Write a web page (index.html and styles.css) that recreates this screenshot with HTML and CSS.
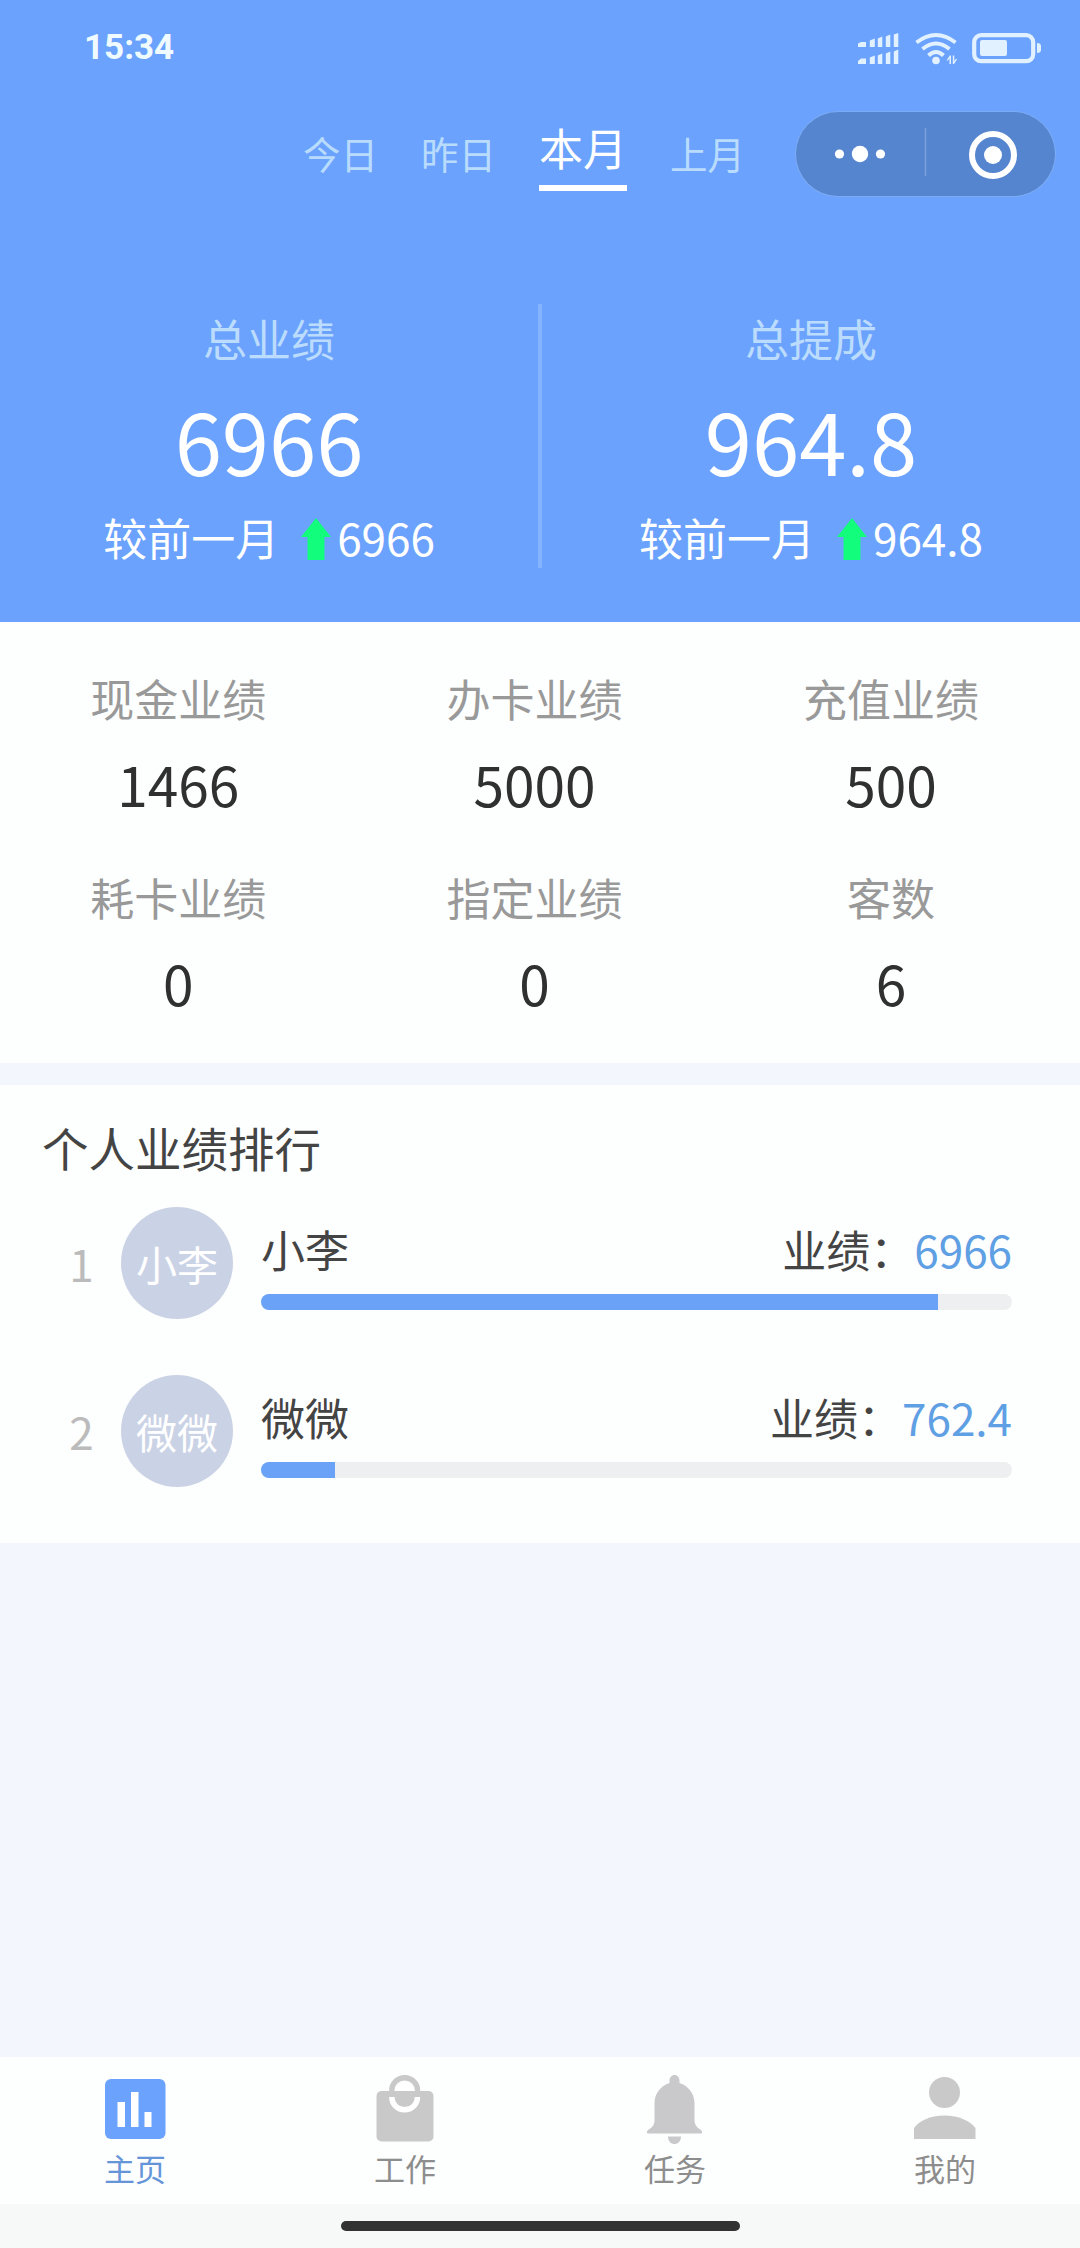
FILE: index.html
```html
<!DOCTYPE html>
<html lang="zh-CN">
<head>
<meta charset="utf-8">
<title>个人业绩</title>
<link rel="stylesheet" href="styles.css">
</head>
<body>
<header class="hero">
  <div class="status">
    <span class="time">15:34</span>
    <svg class="status-icons" width="186" height="34" viewBox="0 0 186 34" fill="#e2f1ff">
      <path d="M1 12.500l3-1.500h5v5H1zM12.800 9.500l5-2v8.500h-5zM20.800 7.500l4.500-2v10.500h-4.500zM28.800 5.500l4.500-2v12.500h-4.500zM36.800 3.500l4.500-1.500v14h-4.500z"/>
      <path d="M1 30l3-2.500h5v5.500H1zM12.800 26.500l5-2v8.500h-5zM20.800 24.500l4.500-2v10.500h-4.500zM28.800 22.500l4.500-2v12.500h-4.500zM36.800 20.500l4.500-2v14.500h-4.500z"/>
      <g fill="none" stroke="#e2f1ff" stroke-width="4">
        <path d="M59.500 11.500q19.500-15 39 0"/>
        <path d="M65.500 18q13.500-11 27 0"/>
        <path d="M71.500 24.500q7.500-7 15 0"/>
      </g>
      <circle cx="79" cy="29.500" r="3.800"/>
      <path d="M89.500 29.500l3.300-5h1.200v8.500h-1.500v-5.500l-1.500 2zM95.800 24.500h1.500v5.500l1.500-2h1.500l-3.300 5h-1.200z"/>
      <rect x="117.200" y="4.200" width="59" height="26" rx="7" fill="none" stroke="#e2f1ff" stroke-width="4.200"/>
      <rect x="123" y="9" width="27" height="16" rx="2"/>
      <path d="M180 12q4 0 4 3v4q0 3-4 3z"/>
    </svg>
  </div>
  <div class="navbar">
    <nav class="tabs">
      <span class="tab">今日</span>
      <span class="tab">昨日</span>
      <span class="tab active">本月</span>
      <span class="tab">上月</span>
    </nav>
    <div class="capsule">
      <svg width="259" height="83" viewBox="0 0 259 83">
        <g fill="#fff"><circle cx="43.500" cy="42" r="4.600"/><circle cx="64" cy="42" r="8.200"/><circle cx="84.500" cy="42" r="4.600"/><circle cx="197" cy="43" r="9"/></g>
        <path d="M129.500 16v48" stroke="#7ba2dc" stroke-width="1.500"/>
        <circle cx="197" cy="43" r="21" fill="none" stroke="#fff" stroke-width="6"/>
      </svg>
    </div>
  </div>
  <div class="totals">
    <div class="total">
      <div class="total-label">总业绩</div>
      <div class="total-value">6966</div>
      <div class="compare">较前一月
        <svg class="up" width="30" height="42" viewBox="0 0 30 42"><path d="M15 0L30 19H23.500V42H6.500V19H0z" fill="#12fd7c"/></svg>6966</div>
    </div>
    <div class="rule"></div>
    <div class="total">
      <div class="total-label">总提成</div>
      <div class="total-value">964.8</div>
      <div class="compare">较前一月
        <svg class="up" width="30" height="42" viewBox="0 0 30 42"><path d="M15 0L30 19H23.500V42H6.500V19H0z" fill="#12fd7c"/></svg>964.8</div>
    </div>
  </div>
</header>
<section class="stats">
  <div class="stat"><div class="stat-label">现金业绩</div><div class="stat-value">1466</div></div>
  <div class="stat"><div class="stat-label">办卡业绩</div><div class="stat-value">5000</div></div>
  <div class="stat"><div class="stat-label">充值业绩</div><div class="stat-value">500</div></div>
  <div class="stat"><div class="stat-label">耗卡业绩</div><div class="stat-value">0</div></div>
  <div class="stat"><div class="stat-label">指定业绩</div><div class="stat-value">0</div></div>
  <div class="stat"><div class="stat-label">客数</div><div class="stat-value">6</div></div>
</section>
<section class="ranking">
  <h2 class="title">个人业绩排行</h2>
  <div class="row">
    <span class="rank">1</span>
    <span class="avatar">小李</span>
    <div class="detail">
      <div class="line"><span>小李</span><span>业绩：<b class="amount">6966</b></span></div>
      <div class="bar"><div class="fill" style="width:90.1%"></div></div>
    </div>
  </div>
  <div class="row">
    <span class="rank">2</span>
    <span class="avatar">微微</span>
    <div class="detail">
      <div class="line"><span>微微</span><span>业绩：<b class="amount">762.4</b></span></div>
      <div class="bar"><div class="fill" style="width:9.850%"></div></div>
    </div>
  </div>
</section>
<footer class="footer">
  <nav class="menu">
    <a class="item current">
      <svg width="70" height="72" viewBox="0 0 70 72"><rect x="5" y="5" width="60.500" height="60" rx="6" fill="#6aa2fd"/><path d="M17.500 28h7.500v25h-7.500zM31 18h7.500v35H31zM44.500 38h7v15h-7z" fill="#fff"/></svg>
      <span>主页</span>
    </a>
    <a class="item">
      <svg width="70" height="72" viewBox="0 0 70 72"><rect x="6.500" y="17" width="57" height="50.500" rx="5" fill="#c9c9c9"/><path d="M21.800 18v-1.500a12.800 12.800 0 0 1 25.700 0V18" fill="none" stroke="#c9c9c9" stroke-width="5.500"/><path d="M24.500 17a10.300 10.300 0 0 1 20.300 0z" fill="#fff"/><path d="M21.800 23a12.800 12.800 0 0 0 25.700 0" fill="none" stroke="#fff" stroke-width="5.500"/></svg>
      <span>工作</span>
    </a>
    <a class="item">
      <svg width="70" height="72" viewBox="0 0 70 72"><path d="M34.500 1c3 0 5 2.500 5 5.500v2.500c9 3 15 10.500 15 20.500v17c0 4 2 6.500 5 8.500 3 1.500 3 4 2 4.500H7.500c-1-.5-1-3 2-4.500 3-2 5-4.500 5-8.500v-17c0-10 6-17.500 15-20.500V6.500c0-3 2-5.500 5-5.500zM28 62.500h13c0 10-13 10-13 0z" fill="#c9c9cc"/></svg>
      <span>任务</span>
    </a>
    <a class="item">
      <svg width="70" height="72" viewBox="0 0 70 72"><circle cx="34.500" cy="18.500" r="15.500" fill="#c9c9c9"/><path d="M4 65V54C9 47 20 41.500 34.500 41.500S60 47 65.500 54v11z" fill="#c9c9c9"/></svg>
      <span>我的</span>
    </a>
  </nav>
  <div class="gesture"><div class="handle"></div></div>
</footer>
</body>
</html>
```

FILE: styles.css
```css
* { box-sizing: border-box; }
body {
  margin: 0;
  width: 1080px;
  height: 2248px;
  display: flex;
  flex-direction: column;
  background: #f4f6fe;
  color: #444;
  font-family: "Noto Sans CJK SC", sans-serif;
  font-size: 44px;
  font-weight: 400;
  overflow: hidden;
}
svg { display: block; flex: none; }

.hero { height: 622px; background: #6aa2fd; color: #fff; }
.status {
  height: 96px;
  padding: 0 37px 0 84px;
  display: flex;
  justify-content: space-between;
  align-items: center;
}
.time { font: 700 35px/40px Roboto, sans-serif; color: #f0fbff; }
.navbar {
  height: 116px;
  padding: 0 25px 0 303px;
  display: flex;
  justify-content: space-between;
  align-items: center;
}
.tabs { display: flex; align-items: center; gap: 43px; }
.tab {
  font-size: 37.500px;
  line-height: 54px;
  padding-bottom: 3px;
  color: #b9dcfd;
}
.tab.active {
  font-size: 44px;
  line-height: 58px;
  height: 73px;
  padding: 0;
  color: #fff;
  border-bottom: 6px solid #fff;
}
.capsule {
  width: 259px;
  height: 84px;
  border-radius: 42px;
  background: #5685cf;
  box-shadow: 0 0 0 1px #7cabf5;
}
.totals { display: flex; padding-top: 92px; }
.total { flex: 1; display: flex; flex-direction: column; align-items: center; }
.rule { width: 4px; height: 264px; background: #84b4fe; }
.total-label { line-height: 64px; margin-top: 2px; color: #bcdcfd; }
.total-value { font-size: 85px; line-height: 110px; margin-top: 14px; }
.compare { display: flex; align-items: center; line-height: 64px; margin-top: 11px; white-space: nowrap; }
.up { margin: 4px 6px 0 22px; }

.stats {
  height: 441px;
  padding-top: 44px;
  background: #fdfefe;
  display: grid;
  grid-template-columns: repeat(3, 33%);
  grid-auto-rows: 199px;
  text-align: center;
}
.stat-label { line-height: 64px; color: #999; }
.stat-value { font-size: 55px; line-height: 80px; margin-top: 13px; color: #303030; }

.ranking {
  height: 458px;
  margin-top: 22px;
  padding: 28px 68px 0 42px;
  background: #fdfefe;
}
.title { margin: 0 0 26px; font-size: 46.500px; font-weight: 400; line-height: 68px; }
.row { display: flex; height: 112px; margin-bottom: 55.500px; }
.rank { width: 79px; text-align: center; line-height: 112px; color: #bbb; }
.avatar {
  width: 112px;
  height: 112px;
  border-radius: 50%;
  background: #cad2e5;
  color: #fff;
  font-size: 41px;
  line-height: 113px;
  text-align: center;
}
.detail { flex: 1; margin-left: 28px; padding-top: 10px; }
.line { display: flex; justify-content: space-between; line-height: 64px; }
.amount { font-weight: 400; color: #5f9fe3; }
.bar { height: 16px; margin-top: 13px; border-radius: 8px; background: #edeff1; overflow: hidden; }
.fill { height: 16px; background: #6aa2f8; }

.footer { margin-top: auto; }
.menu { display: grid; grid-template-columns: repeat(4, 1fr); height: 147px; padding-top: 17px; background: #fdfefe; }
.item {
  display: flex;
  flex-direction: column;
  align-items: center;
  font-size: 31px;
  line-height: 44px;
  color: #8d8d8d;
}
.item.current { color: #6595d8; }
.gesture { height: 44px; padding-top: 17px; background: #f7f8f8; }
.handle { width: 399px; height: 10px; margin: 0 auto; border-radius: 5px; background: #323232; }
```
